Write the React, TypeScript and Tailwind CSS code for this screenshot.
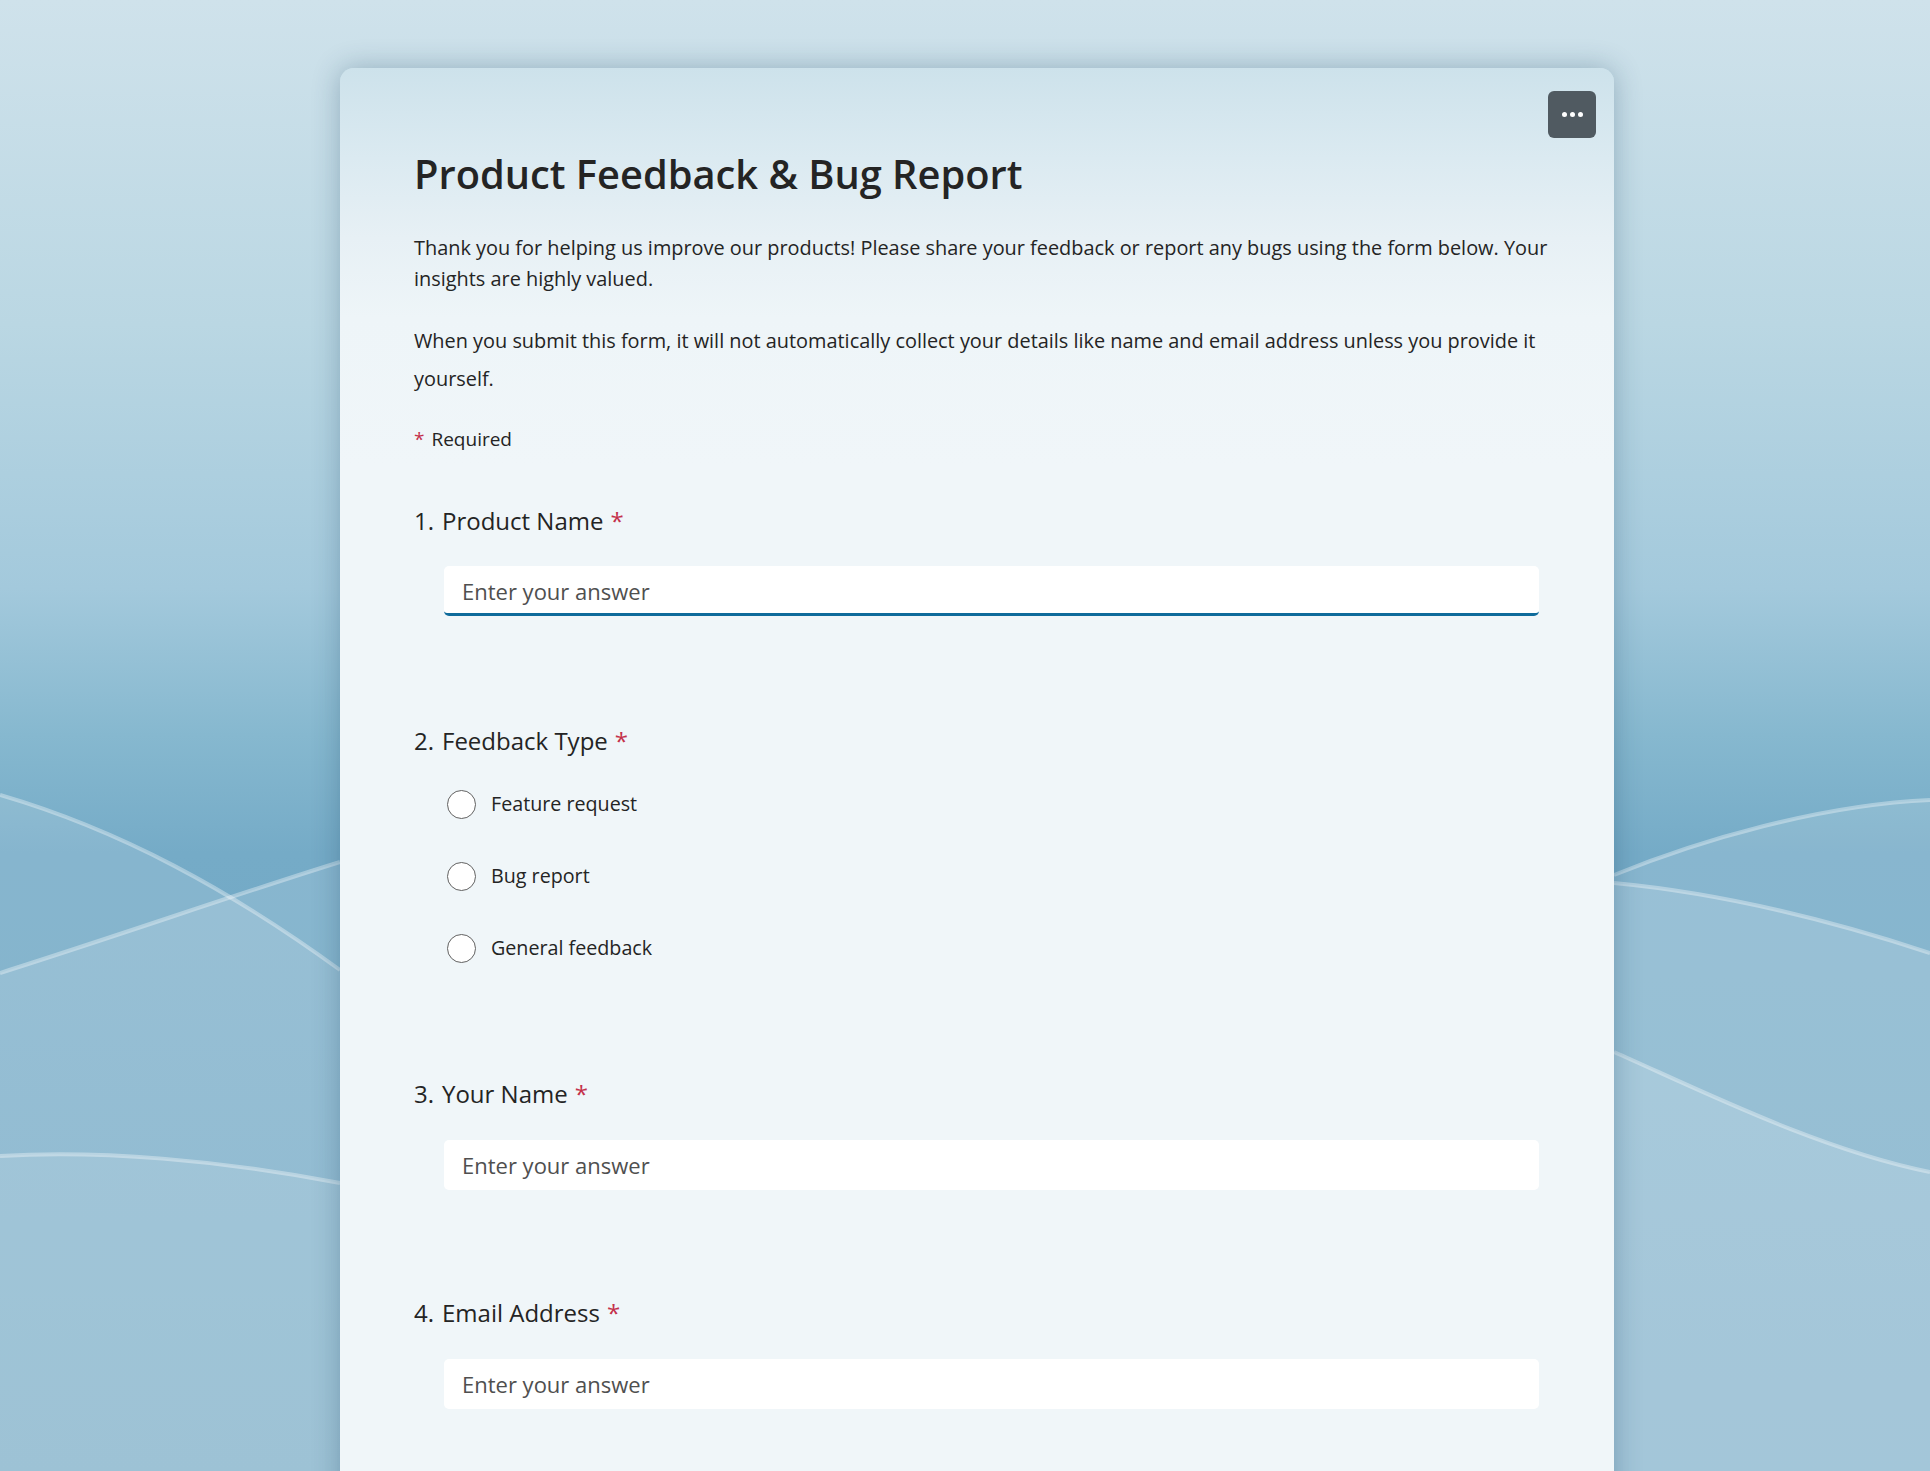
import React from "react";

function Background() {
  return (
    <svg
      className="absolute inset-0 h-full w-full"
      viewBox="0 0 1930 1471"
      preserveAspectRatio="none"
      aria-hidden="true"
    >
      <defs>
        <linearGradient id="bg" x1="0" y1="0" x2="0" y2="1">
          <stop offset="0" stopColor="#cfe2eb" />
          <stop offset="0.22" stopColor="#bad7e3" />
          <stop offset="0.4" stopColor="#a3c9dc" />
          <stop offset="0.5" stopColor="#86b8cf" />
          <stop offset="0.58" stopColor="#75abc7" />
          <stop offset="1" stopColor="#6ba4c2" />
        </linearGradient>
      </defs>
      <rect x="0" y="0" width="1930" height="1471" fill="url(#bg)" />
      {/* left waves */}
      <path d="M0,795 C120,830 230,890 340,970 C420,1030 480,1100 520,1471 L0,1471 Z" fill="#ffffff" fillOpacity="0.13" />
      <path d="M0,973 C120,935 240,893 340,862 C420,838 480,820 520,810 L520,1471 L0,1471 Z" fill="#ffffff" fillOpacity="0.14" />
      <path d="M0,1156 C100,1150 220,1160 340,1183 C420,1198 480,1210 520,1220 L520,1471 L0,1471 Z" fill="#ffffff" fillOpacity="0.12" />
      <path d="M0,795 C120,830 230,890 340,970" fill="none" stroke="#ffffff" strokeOpacity="0.35" strokeWidth="4" />
      <path d="M0,973 C120,935 240,893 340,862" fill="none" stroke="#ffffff" strokeOpacity="0.35" strokeWidth="4" />
      <path d="M0,1156 C100,1150 220,1160 340,1183" fill="none" stroke="#ffffff" strokeOpacity="0.35" strokeWidth="4" />
      {/* right waves */}
      <path d="M1560,895 C1580,888 1600,881 1614,875 C1700,840 1820,805 1930,800 L1930,1471 L1560,1471 Z" fill="#ffffff" fillOpacity="0.14" />
      <path d="M1560,880 C1580,880 1600,882 1614,883 C1720,893 1830,920 1930,953 L1930,1471 L1560,1471 Z" fill="#ffffff" fillOpacity="0.15" />
      <path d="M1560,1030 C1580,1038 1600,1046 1614,1052 C1700,1090 1820,1150 1930,1172 L1930,1471 L1560,1471 Z" fill="#ffffff" fillOpacity="0.16" />
      <path d="M1614,875 C1700,840 1820,805 1930,800" fill="none" stroke="#ffffff" strokeOpacity="0.35" strokeWidth="4" />
      <path d="M1614,883 C1720,893 1830,920 1930,953" fill="none" stroke="#ffffff" strokeOpacity="0.35" strokeWidth="4" />
      <path d="M1614,1052 C1700,1090 1820,1150 1930,1172" fill="none" stroke="#ffffff" strokeOpacity="0.35" strokeWidth="4" />
    </svg>
  );
}

function Star() {
  return <span className="ml-[7px] text-[#c4314b]">*</span>;
}

function Label({ n, text }: { n: number; text: string }) {
  return (
    <div className="flex h-[32px] items-center text-[24px] leading-[32px] text-[#242424]">
      <span className="w-[28px]">{n}.</span>
      <span>{text}</span>
      <Star />
    </div>
  );
}

function TextInput({ focused }: { focused?: boolean }) {
  return (
    <div
      className={
        focused
          ? "ml-[30px] mr-[15px] flex h-[50px] items-center rounded-[5px] border-b-[3px] border-[#0f6b9b] bg-white pl-[18px] pt-[3px] text-[22px] text-[#4f4f4f]"
          : "ml-[30px] mr-[15px] flex h-[50px] items-center rounded-[5px] bg-white pl-[18px] pt-[1px] text-[22px] text-[#4f4f4f]"
      }
    >
      Enter your answer
    </div>
  );
}

function Radio({ label }: { label: string }) {
  return (
    <div className="ml-[33px] flex h-[44px] items-center gap-[15px]">
      <span className="h-[29px] w-[29px] rounded-full border-[1.5px] border-[#616161] bg-white" />
      <span className="text-[19.7px] text-[#242424]">{label}</span>
    </div>
  );
}

export default function App() {
  return (
    <div
      className="relative h-[1471px] w-full overflow-hidden"
      style={{ fontFamily: '"Open Sans", "Noto Sans", sans-serif' }}
    >
      <Background />
      <div className="relative ml-[340px] mt-[68px] w-[1274px] rounded-t-[14px] bg-[linear-gradient(180deg,#cde2eb_0px,#dbeaf1_90px,#e7f0f5_170px,#eef5f8_250px,#f0f6f9_400px,#f0f6f9_100%)] pb-[300px] pl-[74px] pr-[30px] pt-[80px] shadow-[0_0_28px_rgba(20,60,90,0.3)]">
        <button className="absolute right-[18px] top-[23px] flex h-[47px] w-[48px] items-center justify-center gap-[3px] rounded-[6px] bg-[#505a61]">
          <span className="h-[5px] w-[5px] rounded-full bg-white" />
          <span className="h-[5px] w-[5px] rounded-full bg-white" />
          <span className="h-[5px] w-[5px] rounded-full bg-white" />
        </button>

        <h1 className="h-[52px] text-[39.8px] font-semibold leading-[52px] text-[#242424]">
          Product Feedback &amp; Bug Report
        </h1>

        <p className="mt-[32px] whitespace-nowrap text-[19.9px] leading-[31px] text-[#242424]">
          Thank you for helping us improve our products! Please share your feedback or report any bugs using the form below. Your
          <br />
          insights are highly valued.
        </p>

        <p className="mt-[28px] whitespace-nowrap text-[19.9px] leading-[38px] text-[#242424]">
          When you submit this form, it will not automatically collect your details like name and email address unless you provide it
          <br />
          yourself.
        </p>

        <div className="mt-[26px] flex h-[30px] items-center text-[19px] text-[#242424]">
          <span className="mr-[7px] text-[#c4314b]">*</span>
          <span>Required</span>
        </div>

        <div className="mt-[51px] pr-[30px]">
          <Label n={1} text="Product Name" />
          <div className="mt-[29px]">
            <TextInput focused />
          </div>
        </div>

        <div className="mt-[109px] pr-[30px]">
          <Label n={2} text="Feedback Type" />
          <div className="mt-[25px] flex flex-col gap-[28px]">
            <Radio label="Feature request" />
            <Radio label="Bug report" />
            <Radio label="General feedback" />
          </div>
        </div>

        <div className="mt-[108px] pr-[30px]">
          <Label n={3} text="Your Name" />
          <div className="mt-[30px]">
            <TextInput />
          </div>
        </div>

        <div className="mt-[107px] pr-[30px]">
          <Label n={4} text="Email Address" />
          <div className="mt-[30px]">
            <TextInput />
          </div>
        </div>
      </div>
    </div>
  );
}
